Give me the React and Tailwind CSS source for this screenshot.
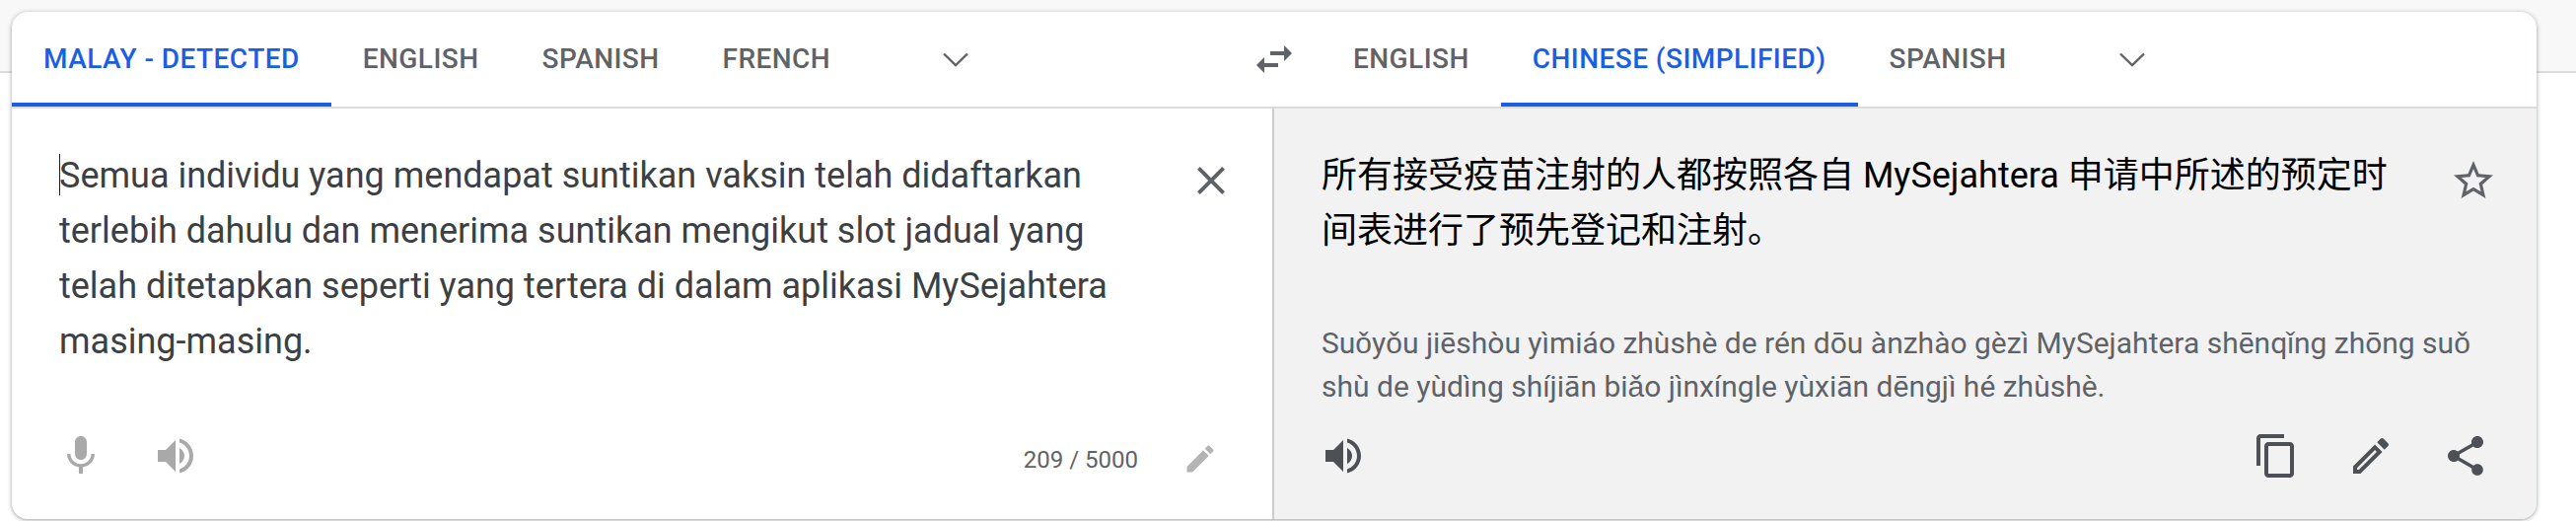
import React from 'react';

const roboto = "font-['Roboto',sans-serif]";

function Icon({ d, className, size = 'w-12 h-12' }) {
  return (
    <svg viewBox="0 0 24 24" className={`${size} shrink-0 fill-current ${className || ''}`}>
      <path d={d} />
    </svg>
  );
}

const micPath = "M12 14c1.66 0 2.99-1.34 2.99-3L15 5c0-1.66-1.34-3-3-3S9 3.34 9 5v6c0 1.66 1.34 3 3 3zm5.3-3c0 3-2.54 5.1-5.3 5.1S6.7 14 6.7 11H5c0 3.41 2.72 6.23 6 6.72V21h2v-3.28c3.28-.48 6-3.3 6-6.72h-1.7z";
const speakerPath = "M3 9v6h4l5 5V4L7 9H3zm13.5 3c0-1.77-1.02-3.29-2.5-4.03v8.05c1.48-.73 2.5-2.25 2.5-4.02zM14 3.23v2.06c2.89.86 5 3.54 5 6.71s-2.11 5.85-5 6.71v2.06c4.01-.91 7-4.49 7-8.77s-2.99-7.86-7-8.77z";
const closePath = "M19 6.41L17.59 5 12 10.59 6.41 5 5 6.41 10.59 12 5 17.59 6.41 19 12 13.41 17.59 19 19 17.59 13.41 12z";
const swapPath = "M6.99 11L3 15l3.99 4v-3H14v-2H6.99v-3zM21 9l-3.99-4v3H10v2h7.01v3L21 9z";
const starPath = "M22 9.24l-7.19-.62L12 2 9.19 8.63 2 9.24l5.46 4.73L5.82 21 12 17.27 18.18 21l-1.63-7.03L22 9.24zM12 15.4l-3.76 2.27 1-4.28-3.32-2.88 4.38-.38L12 6.1l1.71 4.04 4.38.38-3.32 2.88 1 4.28L12 15.4z";
const copyPath = "M16 1H4c-1.1 0-2 .9-2 2v14h2V3h12V1zm3 4H8c-1.1 0-2 .9-2 2v14c0 1.1.9 2 2 2h11c1.1 0 2-.9 2-2V7c0-1.1-.9-2-2-2zm0 16H8V7h11v14z";
const editSolid = "M3 17.25V21h3.75L17.81 9.94l-3.75-3.75L3 17.25zM20.71 7.04c.39-.39.39-1.02 0-1.41l-2.34-2.34c-.39-.39-1.02-.39-1.41 0l-1.83 1.83 3.75 3.75 1.83-1.83z";
const editOutline = "M14.06 9.02l.92.92L5.92 19H5v-.92l9.06-9.06M17.66 3c-.25 0-.51.1-.7.29l-1.83 1.83 3.75 3.75 1.83-1.83c.39-.39.39-1.02 0-1.41l-2.34-2.34c-.2-.2-.45-.29-.71-.29zm-3.6 3.19L3 17.25V21h3.75L17.81 9.94l-3.75-3.75z";
const sharePath = "M18 16.08c-.76 0-1.44.3-1.96.77L8.91 12.7c.05-.23.09-.46.09-.7s-.04-.47-.09-.7l7.05-4.11c.54.5 1.25.81 2.04.81 1.66 0 3-1.34 3-3s-1.34-3-3-3-3 1.34-3 3c0 .24.04.47.09.7L8.04 9.81C7.5 9.31 6.79 9 6 9c-1.66 0-3 1.34-3 3s1.34 3 3 3c.79 0 1.5-.31 2.04-.81l7.12 4.16c-.05.21-.08.43-.08.65 0 1.61 1.31 2.92 2.92 2.92 1.61 0 2.92-1.31 2.92-2.92s-1.31-2.92-2.92-2.92z";

function Tab({ label, active }) {
  return (
    <div
      className={`h-full px-8 flex items-center text-[28px] tracking-[0.45px] font-medium border-b-4 pt-1 ${
        active ? 'text-[#1a5fe3] border-[#1a5fe3]' : 'text-[#5f6368] border-transparent'
      }`}
    >
      {label}
    </div>
  );
}

function Chevron() {
  return (
    <svg viewBox="0 0 26 15" className="w-[26px] h-[15px] ml-[82px] text-[#5f6368]">
      <path d="M1 1.5 L13 13 L25 1.5" fill="none" stroke="currentColor" strokeWidth="2.4" />
    </svg>
  );
}

export default function App() {
  return (
    <div className={`w-full min-h-[528px] pt-3 pl-3 pr-10 pb-0.5 ${roboto} bg-[linear-gradient(to_bottom,#f8f8f8_72px,#dadce0_72px,#dadce0_74px,#ffffff_74px)]`}>
      <div className="h-[514px] rounded-2xl bg-white shadow-[0_1px_4px_rgba(60,64,67,0.5)] overflow-hidden flex flex-col">
        <div className="h-[98px] flex border-b-2 border-[#dcdcdc] shrink-0">
          <div className="w-[1232px] flex items-center">
            <Tab label="MALAY - DETECTED" active />
            <Tab label="ENGLISH" />
            <Tab label="SPANISH" />
            <Tab label="FRENCH" />
            <Chevron />
          </div>
          <div className="w-24 flex items-center justify-center text-[#5f6368]">
            <Icon d={swapPath} />
          </div>
          <div className="flex items-center">
            <Tab label="ENGLISH" />
            <Tab label="CHINESE (SIMPLIFIED)" active />
            <Tab label="SPANISH" />
            <Chevron />
          </div>
        </div>

        <div className="flex-1 flex">
          <div className="w-[1280px] flex flex-col justify-between border-r-2 border-[#cccccc] pl-12 pr-[38px] pt-10 pb-10">
            <div className="flex justify-between">
              <div className="relative text-[36px] leading-[56px] text-[#3c4043]">
                <span className="absolute left-0 top-[6px] w-px h-[42px] bg-[#202124]" />
                Semua individu yang mendapat suntikan vaksin telah didaftarkan
                <br />
                terlebih dahulu dan menerima suntikan mengikut slot jadual yang
                <br />
                telah ditetapkan seperti yang tertera di dalam aplikasi MySejahtera
                <br />
                masing-masing.
              </div>
              <Icon d={closePath} className="text-[#5f6368] mt-[9px]" />
            </div>
            <div className="flex items-center">
              <Icon d={micPath} className="text-[#a9a9a9] ml-[-2px]" />
              <Icon d={speakerPath} className="text-[#a9a9a9] ml-12" />
              <span className="ml-auto text-2xl text-[#5f6368] pt-2">209 / 5000</span>
              <Icon d={editSolid} size="w-9 h-9" className="text-[#b4b4b4] ml-[45px] mr-[17px] mt-[6px]" />
            </div>
          </div>

          <div className="flex-1 bg-[#f2f2f2] flex flex-col justify-between pl-12 pr-12 pt-10 pb-10">
            <div>
              <div className="flex justify-between">
                <div className="text-[36px] leading-[56px] text-black font-['Roboto','Noto_Sans_CJK_SC',sans-serif]">
                  所有接受疫苗注射的人都按照各自 MySejahtera 申请中所述的预定时
                  <br />
                  间表进行了预先登记和注射。
                </div>
                <Icon d={starPath} className="text-[#5f6368] mt-[9px] mr-[-8px]" />
              </div>
              <div className="mt-16 text-[30px] leading-[44px] text-[#5f6368] whitespace-nowrap">
                Suǒyǒu jiēshòu yìmiáo zhùshè de rén dōu ànzhào gèzì MySejahtera shēnqǐng zhōng suǒ
                <br />
                shù de yùdìng shíjiān biǎo jìnxíngle yùxiān dēngjì hé zhùshè.
              </div>
            </div>
            <div className="flex items-center text-[#4d5156]">
              <Icon d={speakerPath} className="ml-[-2px]" />
              <Icon d={copyPath} className="ml-auto" />
              <Icon d={editOutline} className="ml-12" />
              <Icon d={sharePath} className="ml-12" />
            </div>
          </div>
        </div>
      </div>
    </div>
  );
}
